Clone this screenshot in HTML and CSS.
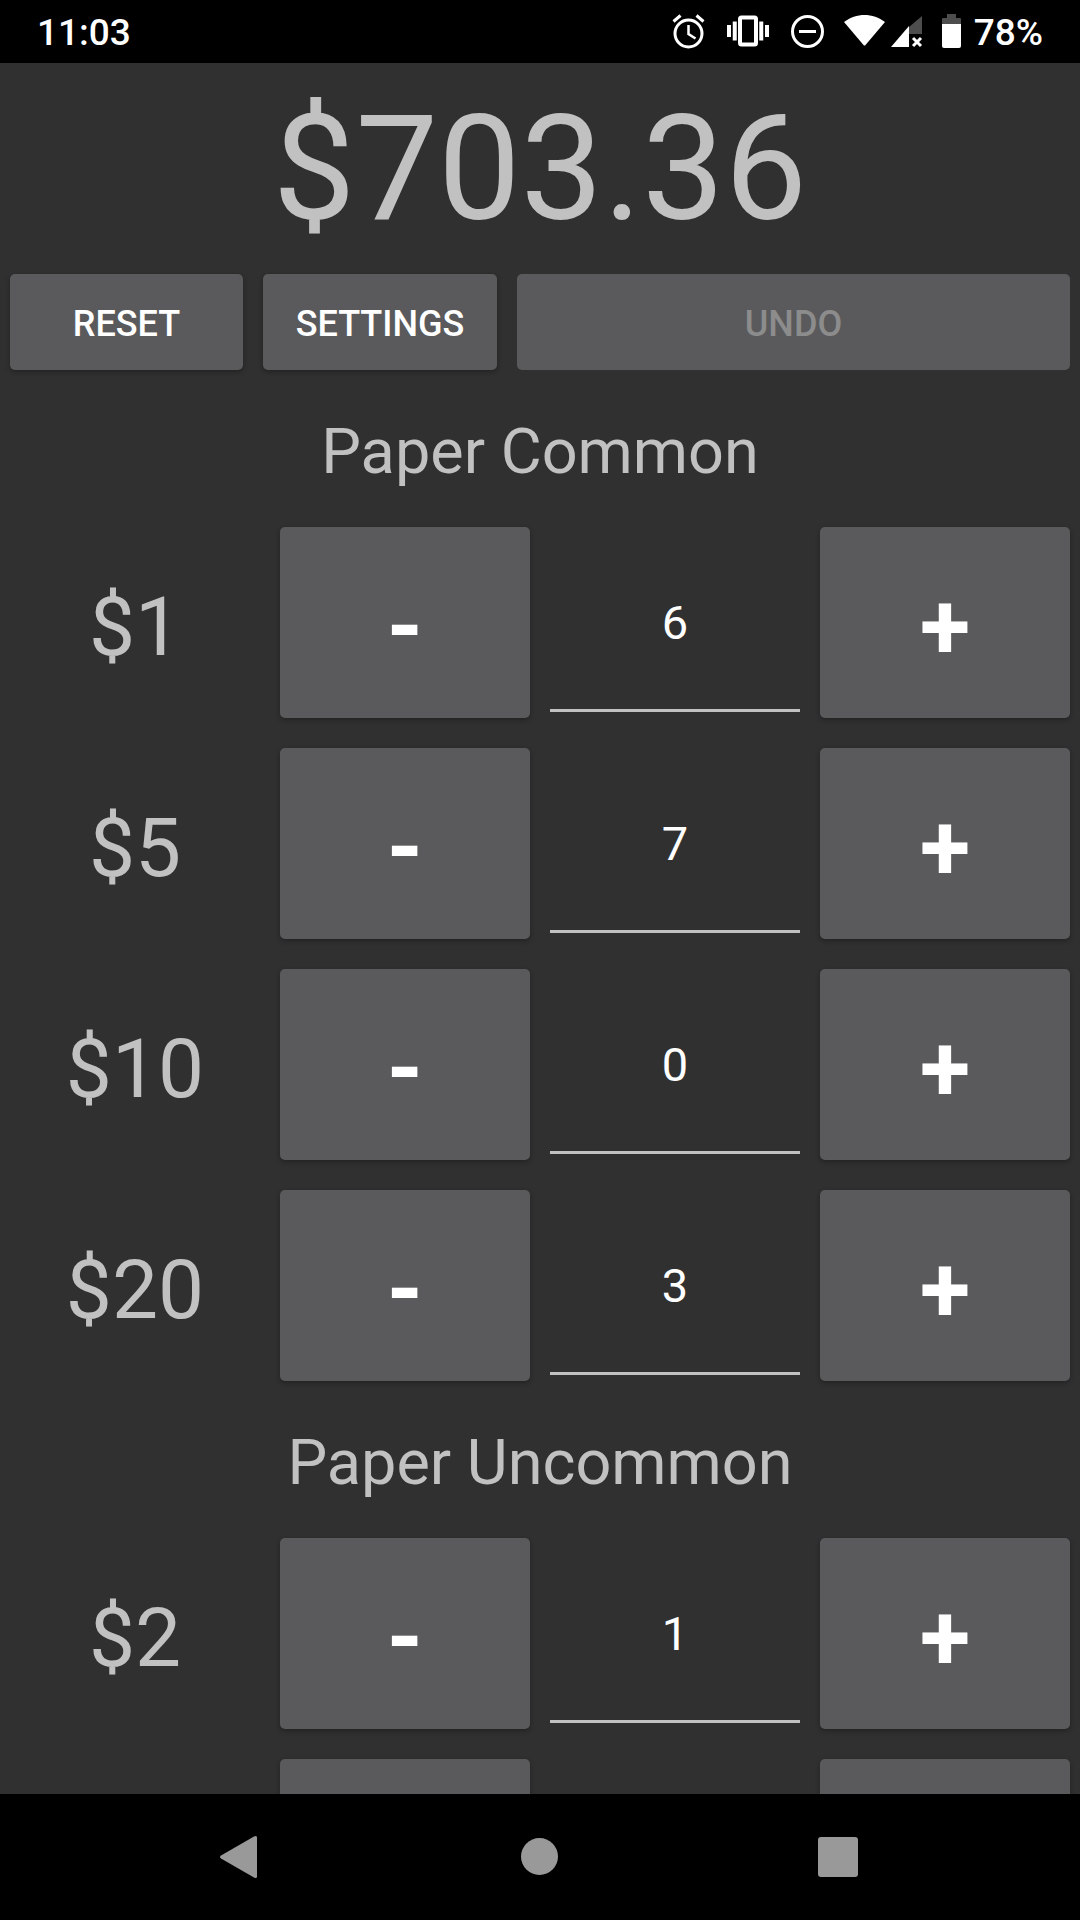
FILE: index.html
```html
<!DOCTYPE html>
<html lang="en">
<head>
<meta charset="utf-8">
<meta name="viewport" content="width=device-width, initial-scale=1">
<title>Cash Counter</title>
<link rel="stylesheet" href="styles.css">
</head>
<body>
<header class="status">
  <time class="status-text">11:03</time>
  <div class="status-icons">
    <svg class="icon-alarm" width="34" height="36" viewBox="0 0 34 36" fill="none" stroke="#fff" aria-hidden="true">
      <circle cx="16.500" cy="19.500" r="13.500" stroke-width="3"/>
      <path d="M16.500 11v9l7 4.500" stroke-width="2.500"/>
      <path d="M1.500 7.500l7-6M31.500 7.500l-7-6" stroke-width="3"/>
    </svg>
    <svg class="icon-vibrate" width="42" height="36" viewBox="0 0 42 36" fill="none" stroke="#fff" aria-hidden="true">
      <rect x="13" y="3.500" width="16" height="27" rx="1.500" stroke-width="4"/>
      <path d="M2 11v12M7.750 7.500v19M34.250 7.500v19M40 11v12" stroke-width="4"/>
    </svg>
    <svg class="icon-dnd" width="34" height="36" viewBox="0 0 34 36" fill="none" stroke="#fff" stroke-width="3" aria-hidden="true">
      <circle cx="17.500" cy="17.500" r="15"/><path d="M9 17.500h17"/>
    </svg>
    <svg class="icon-wifi" width="42" height="36" viewBox="0 0 42 36" aria-hidden="true">
      <path fill="#fff" d="M1 8C13-1.500 30-1.500 42 8L22.500 31q-1 1-2 0z"/>
    </svg>
    <svg class="icon-signal" width="32" height="36" viewBox="0 0 32 36" aria-hidden="true">
      <path fill="#4d4d4d" d="M31 2v18H18V13z"/>
      <path fill="#fff" d="M0 33L18 12v21z"/>
      <path stroke="#fff" stroke-width="3" d="M22 24l8 8M30 24l-8 8"/>
    </svg>
    <svg class="icon-battery" width="20" height="36" viewBox="0 0 20 36" aria-hidden="true">
      <path fill="#4d4d4d" d="M5 0h9v4h4q1 0 1 1v5H0V5q0-1 1-1h4z"/>
      <path fill="#fff" d="M0 10h19v22q0 2-2 2H2q-2 0-2-2z"/>
    </svg>
    <span class="status-text">78%</span>
  </div>
</header>

<main class="counter">
  <h1 class="total">$703.36</h1>
  <div class="toolbar">
    <button class="btn" type="button">RESET</button>
    <button class="btn" type="button">SETTINGS</button>
    <button class="btn" type="button" disabled>UNDO</button>
  </div>

  <section>
    <h2 class="group-title">Paper Common</h2>
    <div class="row">
      <label class="value" for="qty-1">$1</label>
      <button class="btn step" type="button">-</button>
      <input class="qty" id="qty-1" type="text" inputmode="numeric" value="6">
      <button class="btn step" type="button">+</button>
    </div>
    <div class="row">
      <label class="value" for="qty-5">$5</label>
      <button class="btn step" type="button">-</button>
      <input class="qty" id="qty-5" type="text" inputmode="numeric" value="7">
      <button class="btn step" type="button">+</button>
    </div>
    <div class="row">
      <label class="value" for="qty-10">$10</label>
      <button class="btn step" type="button">-</button>
      <input class="qty" id="qty-10" type="text" inputmode="numeric" value="0">
      <button class="btn step" type="button">+</button>
    </div>
    <div class="row">
      <label class="value" for="qty-20">$20</label>
      <button class="btn step" type="button">-</button>
      <input class="qty" id="qty-20" type="text" inputmode="numeric" value="3">
      <button class="btn step" type="button">+</button>
    </div>
  </section>

  <section>
    <h2 class="group-title">Paper Uncommon</h2>
    <div class="row">
      <label class="value" for="qty-2">$2</label>
      <button class="btn step" type="button">-</button>
      <input class="qty" id="qty-2" type="text" inputmode="numeric" value="1">
      <button class="btn step" type="button">+</button>
    </div>
    <div class="row">
      <span class="value"></span>
      <button class="btn step" type="button" aria-label="Remove one"></button>
      <input class="qty" type="text" inputmode="numeric" aria-label="Quantity">
      <button class="btn step" type="button" aria-label="Add one"></button>
    </div>
  </section>
</main>

<nav class="navbar">
  <button class="nav-btn" type="button" aria-label="Back">
    <svg width="44" height="44" viewBox="0 0 44 44" aria-hidden="true"><path fill="#999" d="M34 1.500q3-1.500 3 1v39q0 2.500-3 1L1 23.500q-2-1.500 0-3z"/></svg>
  </button>
  <button class="nav-btn" type="button" aria-label="Home">
    <svg width="44" height="44" viewBox="0 0 44 44" aria-hidden="true"><circle cx="21.500" cy="21.500" r="18.500" fill="#999"/></svg>
  </button>
  <button class="nav-btn" type="button" aria-label="Recent apps">
    <svg width="44" height="44" viewBox="0 0 44 44" aria-hidden="true"><rect x="2" y="2" width="40" height="40" rx="3" fill="#999"/></svg>
  </button>
</nav>
</body>
</html>
```
FILE: styles.css
```css
* {
  box-sizing: border-box;
}

body {
  margin: 0;
  height: 100vh;
  display: flex;
  flex-direction: column;
  overflow: hidden;
  background: #303030;
  color: #c1c1c1;
  font-family: Roboto, "Liberation Sans", sans-serif;
}

h1,
h2 {
  margin: 0;
  font-weight: 400;
  text-align: center;
}

button,
input {
  margin: 0;
  border: 0;
  font-family: inherit;
}

.status {
  flex: none;
  display: flex;
  justify-content: space-between;
  padding: 11px 37px 8px;
  background: #000;
  color: #fff;
}

.status-text {
  font-size: 37px;
  font-weight: 500;
  line-height: 44px;
}

.status-icons {
  display: flex;
  align-items: flex-start;
}

.status-icons svg {
  margin-top: 3px;
}

.icon-alarm,
.icon-vibrate {
  margin-right: 21px;
}

.icon-dnd,
.icon-signal {
  margin-right: 19px;
}

.icon-wifi {
  margin-right: 6px;
}

.icon-battery {
  margin-right: 12px;
}

.counter {
  flex: 1;
  min-height: 0;
  overflow: hidden;
}

.total {
  padding: 20px 0 4px;
  font-size: 147px;
  line-height: 172px;
}

.toolbar,
.row {
  display: grid;
  grid-template-columns: repeat(4, 1fr);
  gap: 20px;
  padding: 15px 10px;
}

.toolbar {
  grid-template-columns: 233fr 234fr 553fr;
}

.btn {
  height: 96px;
  padding: 4px 0 0;
  border-radius: 5px;
  background: #5a5a5c;
  box-shadow: 0 2px 5px rgba(0, 0, 0, 0.3);
  color: #fff;
  font-size: 36px;
  font-weight: 500;
  line-height: 44px;
}

.btn:disabled {
  box-shadow: none;
  color: #8c8c8d;
}

.group-title {
  padding: 30px 0 23px;
  font-size: 63px;
  line-height: 74px;
}

.value {
  padding-top: 9px;
  font-size: 82px;
  line-height: 182px;
  text-align: center;
}

.step {
  height: 191px;
  padding-top: 8px;
  font-size: 92px;
  font-weight: 700;
  line-height: 108px;
}

.qty {
  width: 100%;
  height: 185px;
  padding: 8px 0 0;
  border-bottom: 3px solid #c1c1c1;
  border-radius: 0;
  background: transparent;
  color: #fff;
  font-size: 47px;
  text-align: center;
}

.navbar {
  flex: none;
  display: grid;
  grid-template-columns: repeat(3, 1fr);
  height: 126px;
  padding: 0 93px;
  background: #000;
}

.nav-btn {
  display: flex;
  align-items: center;
  justify-content: center;
  padding: 0;
  background: transparent;
}
```
